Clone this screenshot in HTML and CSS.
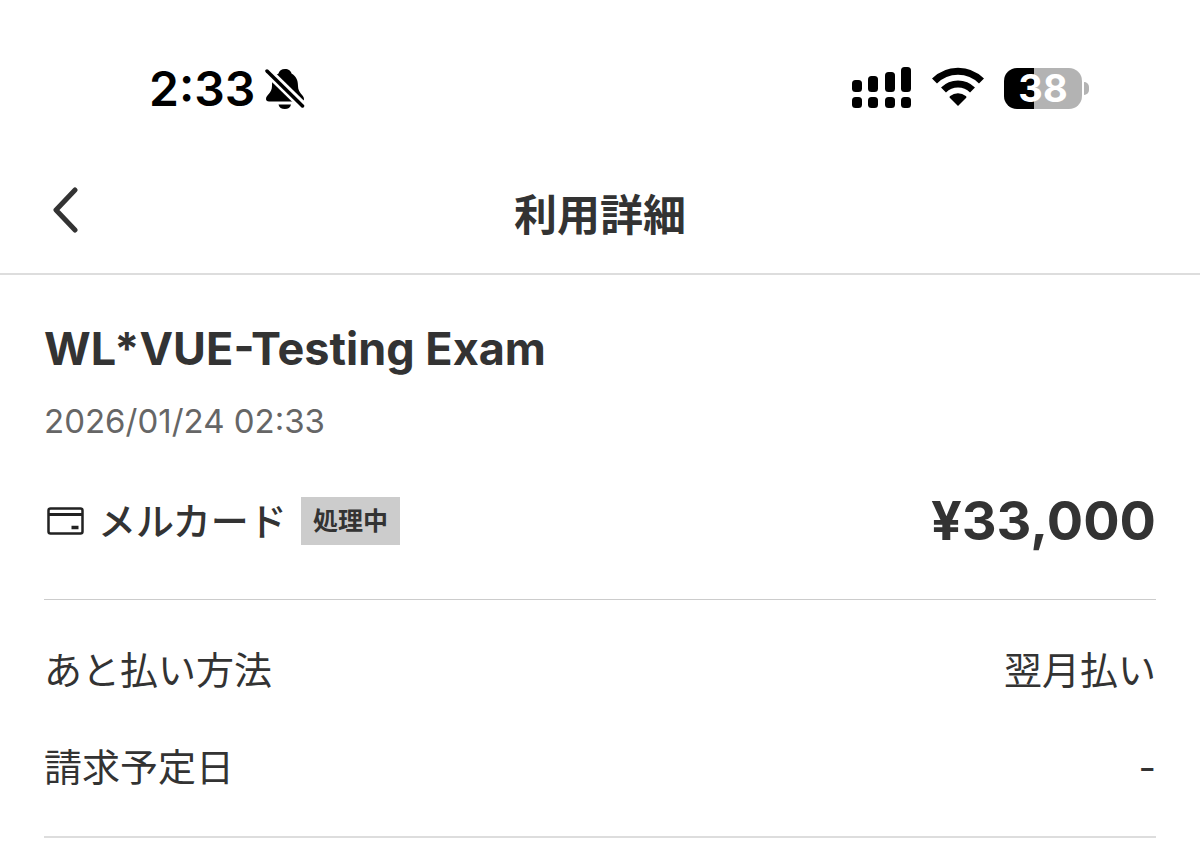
FILE: index.html
```
<!DOCTYPE html>
<html lang="ja">
<head>
    <meta charset="UTF-8">
    <meta name="viewport" content="width=device-width, initial-scale=1.0">
    <title>利用詳細</title>
    <link rel="stylesheet" href="styles.css">
</head>
<body>
    <!-- ステータスバー -->
    <div class="status-bar">
        <div class="status-left">
            <span class="status-time">2:33</span>
            <svg class="icon-bell" width="40" height="42" viewBox="0 0 40 42" aria-hidden="true">
                <path d="M20 1c3.500 0 6 2 6.500 4.500C31 8 33 12 33 18c0 7 6 9 6 13 0 1.500-1 2.500-3 2.500H4c-2 0-3-1-3-2.500C1 27 7 25 7 18c0-6 2-10 6.500-12.500C14 3 16.500 1 20 1z" fill="#000"/>
                <path d="M13.500 36.500h12.500c-.5 3-3 4.500-6.200 4.500s-5.800-1.500-6.300-4.500z" fill="#000"/>
                <path d="M0 1L40 40" stroke="#fff" stroke-width="9"/>
                <path d="M2 3L37.500 38" stroke="#000" stroke-width="3.500" stroke-linecap="round"/>
            </svg>
        </div>
        <div class="status-right">
            <svg width="60" height="42" viewBox="0 0 60 42" aria-hidden="true">
                <rect x="0" y="13" width="10" height="12" rx="3.500"/>
                <rect x="16" y="9" width="10" height="16" rx="3.500"/>
                <rect x="33" y="5" width="10" height="20" rx="3.500"/>
                <rect x="49" y="0" width="10" height="25" rx="3.500"/>
                <rect x="0" y="30" width="10" height="11" rx="3.500"/>
                <rect x="16" y="30" width="10" height="11" rx="3.500"/>
                <rect x="33" y="30" width="10" height="11" rx="3.500"/>
                <rect x="49" y="30" width="10" height="11" rx="3.500"/>
            </svg>
            <svg width="52" height="42" viewBox="0 0 52 42" aria-hidden="true">
                <g fill="none" stroke="#000" stroke-width="7">
                    <path d="M2.500 14a33 33 0 0 1 47 0"/>
                    <path d="M11.500 23a20.500 20.500 0 0 1 29 0"/>
                </g>
                <path d="M26 39l-8-8c-.7-.7-.6-1.400.2-2a12.500 12.500 0 0 1 15.600 0c.8.6.9 1.300.2 2z"/>
            </svg>
            <div class="battery">
                <span class="battery-level">38</span>
                <span class="battery-cap"></span>
            </div>
        </div>
    </div>

    <!-- ヘッダー -->
    <header class="header">
        <button type="button" class="back-btn" aria-label="戻る">
            <svg width="30" height="46" viewBox="0 0 30 46" aria-hidden="true">
                <path d="M25 3L6 23l19 20" fill="none" stroke="#333" stroke-width="5" stroke-linecap="round" stroke-linejoin="round"/>
            </svg>
        </button>
        <h1 class="header-title">利用詳細</h1>
    </header>

    <main class="content">
        <!-- 利用情報 -->
        <section class="summary">
            <h2 class="shop-name">WL*VUE-Testing Exam</h2>
            <time class="used-at" datetime="2026-01-24T02:33">2026/01/24 02:33</time>
            <div class="payment">
                <svg width="38" height="30" viewBox="0 0 38 30" aria-hidden="true">
                    <rect x="2.500" y="2.500" width="34" height="25" rx="2" fill="none" stroke="#222" stroke-width="2.500"/>
                    <path d="M2 8.500h35" stroke="#222" stroke-width="3"/>
                    <path d="M25.500 21.500h7" stroke="#222" stroke-width="3.500"/>
                </svg>
                <span class="card-name">メルカード</span>
                <span class="badge">処理中</span>
                <span class="amount">¥33,000</span>
            </div>
        </section>

        <!-- 支払い情報 -->
        <dl class="details">
            <div class="details-row">
                <dt>あと払い方法</dt>
                <dd>翌月払い</dd>
            </div>
            <div class="details-row">
                <dt>請求予定日</dt>
                <dd>-</dd>
            </div>
        </dl>
    </main>
</body>
</html>
```
FILE: styles.css
```
* {
    box-sizing: border-box;
}

body {
    margin: 0;
    font-family: Inter, "Noto Sans CJK JP", sans-serif;
    background: #fff;
    color: #333;
}

h1, h2, dl, dd {
    margin: 0;
}

svg {
    display: block;
    flex-shrink: 0;
}

.status-bar {
    display: flex;
    justify-content: space-between;
    align-items: flex-start;
    padding: 58px 111px 16px 149px;
    color: #000;
}

.status-left {
    display: flex;
    align-items: center;
    gap: 10px;
}

.status-time {
    font-size: 48px;
    font-weight: 600;
    line-height: 62px;
}

.status-right {
    display: flex;
    align-items: center;
    gap: 20px;
    height: 60px;
}

.battery {
    display: flex;
    align-items: center;
    gap: 2px;
}

.battery-level {
    width: 78px;
    border-radius: 13px;
    background: linear-gradient(90deg, #000 38%, #b3b3b3 38%);
    color: #fff;
    font-size: 38px;
    font-weight: 700;
    line-height: 41px;
    text-align: center;
}

.battery-cap {
    width: 5px;
    height: 13px;
    border-radius: 0 5px 5px 0;
    background: #b3b3b3;
}

.header {
    display: grid;
    grid-template-columns: 1fr auto 1fr;
    align-items: center;
    padding: 49px 44px 28px;
    border-bottom: 2px solid #ddd;
}

.back-btn {
    justify-self: start;
    padding: 0 6px 10px;
    border: none;
    background: none;
    cursor: pointer;
}

.header-title {
    font-size: 43px;
    font-weight: 700;
    line-height: 60px;
}

.content {
    padding: 0 44px;
}

.summary {
    padding: 44px 0 45px;
    border-bottom: 1px solid #ccc;
}

.shop-name {
    font-size: 45px;
    font-weight: 700;
    line-height: 60px;
}

.used-at {
    display: block;
    margin-top: 20px;
    color: #666;
    font-size: 33px;
    line-height: 44px;
}

.payment {
    display: flex;
    align-items: center;
    margin-top: 45px;
    padding-left: 2px;
}

.card-name {
    margin: 0 14px;
    font-size: 38px;
    font-weight: 500;
    line-height: 60px;
}

.badge {
    padding: 0 12px;
    background: #ccc;
    font-size: 25px;
    font-weight: 700;
    line-height: 48px;
}

.amount {
    margin-left: auto;
    font-size: 54px;
    font-weight: 700;
    line-height: 66px;
}

.details {
    display: flex;
    flex-direction: column;
    gap: 37px;
    padding: 40px 0 39px;
    border-bottom: 2px solid #ddd;
}

.details-row {
    display: flex;
    justify-content: space-between;
    font-size: 38px;
    line-height: 60px;
}
```
